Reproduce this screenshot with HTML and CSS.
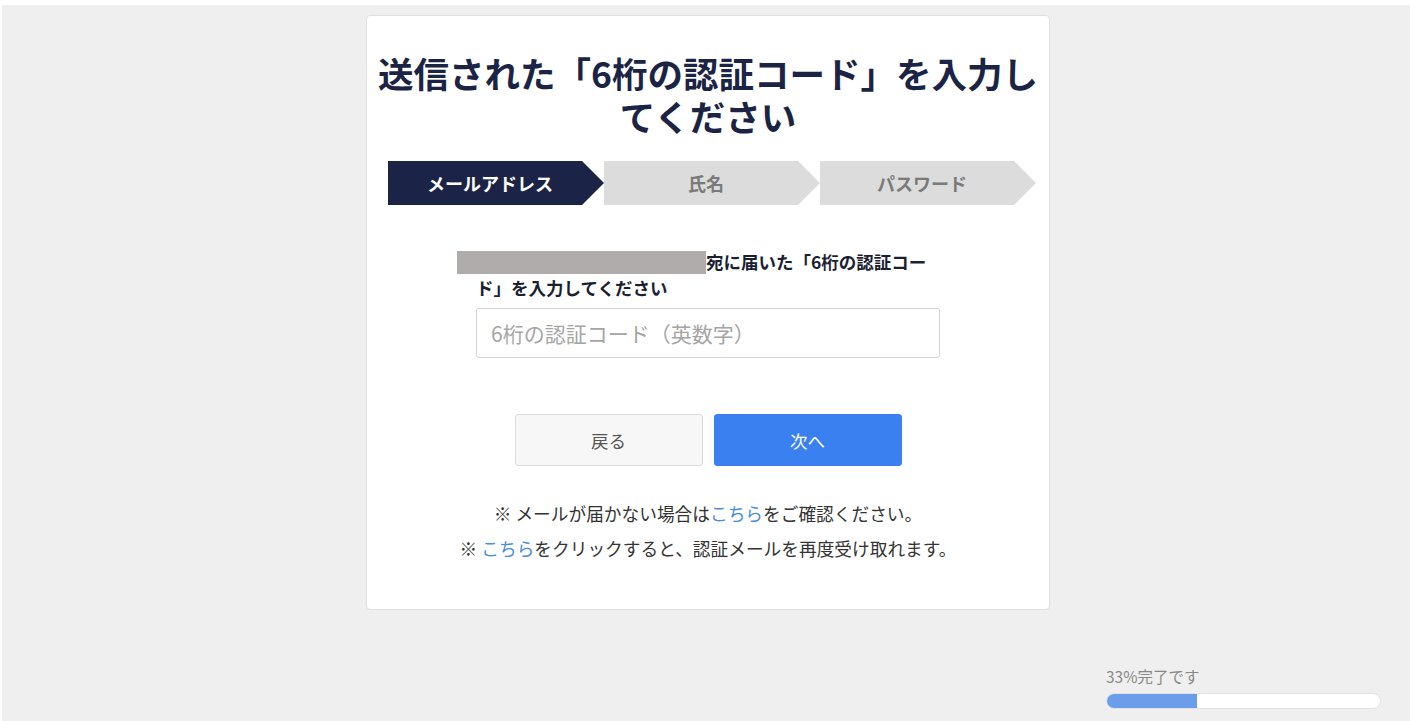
FILE: index.html
```html
<!DOCTYPE html>
<html lang="ja">
<head>
<meta charset="UTF-8">
<meta name="viewport" content="width=device-width, initial-scale=1.0">
<title>認証コード入力</title>
<link rel="stylesheet" href="styles.css">
</head>
<body>
<div class="page">
<div class="card">
<h1 class="title">送信された「6桁の認証コード」を入力してください</h1>
<ol class="steps">
<li class="step active">メールアドレス</li>
<li class="step">氏名</li>
<li class="step">パスワード</li>
</ol>
<div class="form">
<p class="desc"><span class="masked"></span>宛に届いた「6桁の認証コード」を入力してください</p>
<input type="text" class="code-input" placeholder="6桁の認証コード（英数字）">
</div>
<div class="buttons">
<button class="btn btn-back">戻る</button>
<button class="btn btn-next">次へ</button>
</div>
<div class="notes">
<p>※ メールが届かない場合は<a href="#">こちら</a>をご確認ください。</p>
<p>※ <a href="#">こちら</a>をクリックすると、認証メールを再度受け取れます。</p>
</div>
</div>
<div class="progress">
<div class="progress-label">33%完了です</div>
<div class="progress-bar"><div class="progress-fill" style="width: 33%"></div></div>
</div>
</div>
</body>
</html>
```
FILE: styles.css
```css
/* Reset styles */
* {
margin: 0;
padding: 0;
box-sizing: border-box;
font-family: "Noto Sans CJK JP", "Noto Sans", sans-serif;
}
body {
background-color: #fff;
}
.page {
margin: 5px 0 0 2px;
padding: 10px 0 0 4px;
min-height: calc(100vh - 5px);
background-color: #efefef;
display: flex;
flex-direction: column;
}
/* Card */
.card {
width: 684px;
margin: 0 auto;
padding: 35px 10px 43px;
background-color: #fff;
border: 1px solid #e0e0e0;
border-radius: 4px;
}
.title {
font-size: 35.5px;
line-height: 43px;
font-weight: 700;
color: #1b2444;
text-align: center;
}
/* Steps */
.steps {
list-style: none;
display: flex;
margin: 24px 0 0 11px;
}
.step {
width: 216px;
height: 44px;
padding-right: 12px;
display: flex;
align-items: center;
justify-content: center;
font-size: 18px;
font-weight: 700;
color: #7a7a7a;
background-color: #dcdcdc;
clip-path: polygon(0 0, calc(100% - 22px) 0, 100% 50%, calc(100% - 22px) 100%, 0 100%);
}
.step.active {
background-color: #1b2446;
color: #fff;
}
/* Form */
.form {
width: 464px;
margin: 44px auto 0;
}
.desc {
font-size: 17.5px;
line-height: 26px;
font-weight: 700;
color: #1b1f33;
}
.masked {
display: inline-block;
width: 249px;
height: 23px;
margin-left: -19px;
vertical-align: -5px;
background-color: #b0acab;
}
.code-input {
display: block;
width: 100%;
height: 50px;
margin-top: 7px;
padding: 0 14px;
border: 1px solid #d4d4d4;
border-radius: 3px;
font-size: 21px;
color: #333;
}
.code-input::placeholder {
color: #a5a5a5;
}
/* Buttons */
.buttons {
display: flex;
justify-content: center;
gap: 11px;
margin-top: 56px;
}
.btn {
width: 188px;
height: 52px;
border-radius: 3px;
font-size: 17.5px;
cursor: pointer;
}
.btn-back {
background-color: #f7f7f7;
border: 1px solid #dcdcdc;
color: #555;
}
.btn-next {
background-color: #3a80f1;
border: 1px solid #3a80f1;
color: #fff;
}
/* Notes */
.notes {
margin-top: 30px;
text-align: center;
font-size: 17.7px;
line-height: 35px;
color: #333;
}
.notes a {
color: #4a8ed8;
text-decoration: none;
}
/* Progress */
.progress {
align-self: flex-end;
width: 275px;
margin: 56px 29px 0 0;
}
.progress-label {
font-size: 15.5px;
line-height: 20px;
color: #888;
}
.progress-bar {
height: 16px;
margin-top: 7px;
background-color: #fff;
border: 1px solid #e2e2e2;
border-radius: 8px;
overflow: hidden;
}
.progress-fill {
height: 100%;
background-color: #6b9eea;
}
```
